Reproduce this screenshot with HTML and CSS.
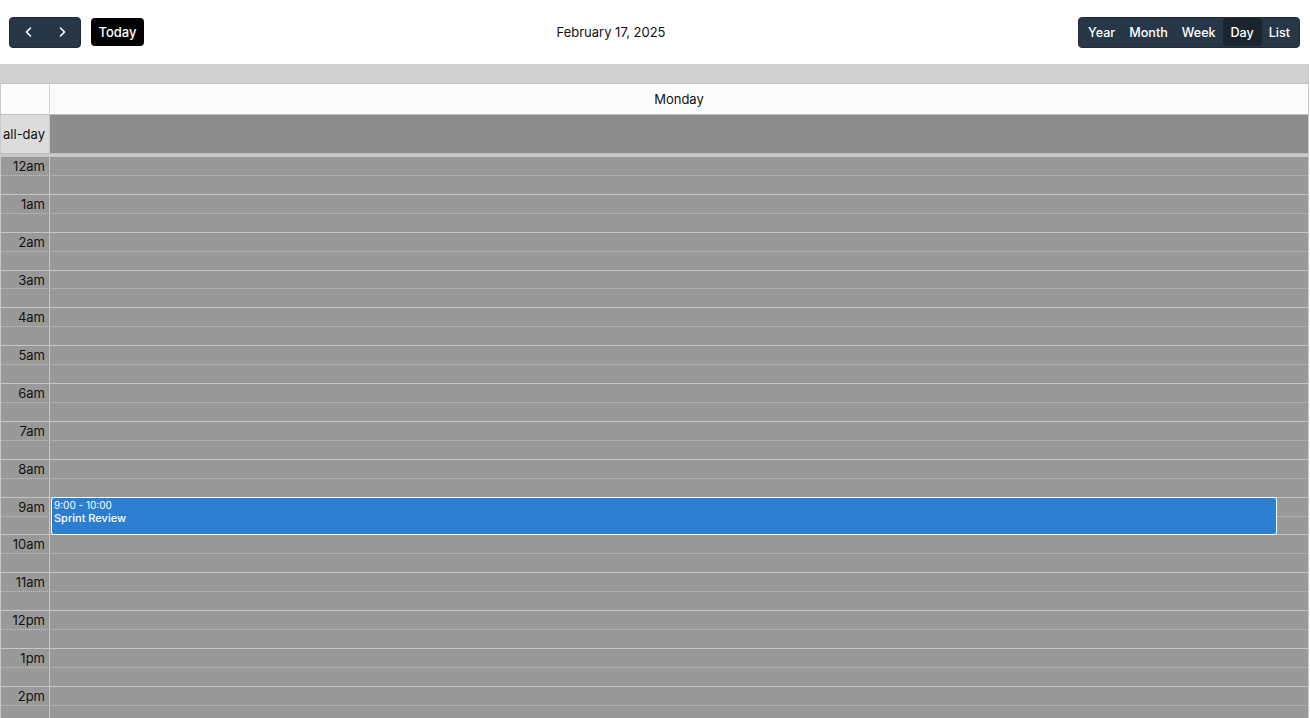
FILE: index.html
```html
<!DOCTYPE html>
<html>

<head>
    <title>Calendar</title>
    <link rel="stylesheet" href="styles.css">
</head>

<body>
    <header class="toolbar">
        <div class="toolbar-left">
            <div class="btn-group">
                <button class="btn btn-icon" aria-label="prev">
                    <svg width="14" height="14" viewBox="0 0 14 14"><path d="M8.5 3 L4.5 7 L8.5 11" /></svg>
                </button>
                <button class="btn btn-icon" aria-label="next">
                    <svg width="14" height="14" viewBox="0 0 14 14"><path d="M5.5 3 L9.5 7 L5.5 11" /></svg>
                </button>
            </div>
            <button class="btn btn-today">Today</button>
        </div>

        <h2 class="title">February 17, 2025</h2>

        <div class="btn-group views">
            <button class="btn">Year</button>
            <button class="btn">Month</button>
            <button class="btn">Week</button>
            <button class="btn active">Day</button>
            <button class="btn">List</button>
        </div>
    </header>

    <div class="calendar">
        <div class="band"></div>

        <div class="head-row">
            <div class="axis"></div>
            <div class="day-name">Monday</div>
        </div>

        <div class="allday-row">
            <div class="axis">all-day</div>
            <div class="allday-lane"></div>
        </div>

        <div class="divider"></div>

        <div class="scroller">
            <div class="slots" id="slots">
                <div class="event" style="top: calc(9 * var(--hour));">
                    <div class="event-time">9:00 - 10:00</div>
                    <div class="event-title">Sprint Review</div>
                </div>
            </div>
        </div>
    </div>

    <script>
        var slots = document.getElementById('slots');
        // only the hours that fit in the scroller before it is scrolled
        var hours = ['12am', '1am', '2am', '3am', '4am', '5am', '6am', '7am', '8am', '9am', '10am', '11am',
            '12pm', '1pm', '2pm'];

        hours.forEach(function (label) {
            ['major', 'minor'].forEach(function (kind) {
                var row = document.createElement('div');
                row.className = 'slot ' + kind;
                row.innerHTML = '<div class="slot-label">' + (kind === 'major' ? label : '') + '</div>' +
                    '<div class="slot-lane"></div>';
                slots.appendChild(row);
            });
        });
    </script>
</body>

</html>
```

FILE: styles.css
```css
html,
body {
    margin: 0;
    height: 100%;
    overflow: hidden;
}

body {
    display: flex;
    flex-direction: column;
    font-family: Inter, "Liberation Sans", sans-serif;
    font-size: 13px;
    color: #1b1b1b;
    background: #ffffff;
}

/* toolbar */

.toolbar {
    display: flex;
    flex: none;
    align-items: center;
    justify-content: space-between;
    height: 64px;
    padding: 0 10px 0 9px;
    box-sizing: border-box;
}

.toolbar-left {
    display: flex;
    align-items: center;
    gap: 10px;
}

.title {
    margin: 0;
    font-size: 13px;
    font-weight: 400;
    color: #111;
}

.btn-group {
    display: flex;
    align-items: center;
    height: 31px;
    padding: 0 2px;
    box-sizing: border-box;
    background: #283747;
    border: 1px solid #1f2b38;
    border-radius: 4px;
}

.btn {
    font-family: inherit;
    font-size: 13px;
    font-weight: 500;
    color: #ffffff;
    background: transparent;
    border: 0;
    border-radius: 4px;
    height: 28px;
    padding: 0 8px;
    cursor: pointer;
}

.btn-icon {
    width: 33px;
    display: flex;
    align-items: center;
    justify-content: center;
    padding: 0;
}

.btn-icon svg path {
    fill: none;
    stroke: #ffffff;
    stroke-width: 1.6;
    stroke-linecap: round;
    stroke-linejoin: round;
}

.btn-today {
    background: #000000;
    width: 53px;
    padding: 0;
}

.views .btn {
    font-size: 12.6px;
    padding: 0 7px;
}

.views .btn.active {
    background: #1b242e;
    width: 39px;
    padding: 0;
}

/* calendar grid */

.calendar {
    --hour: 37.86px;
    --line: #c6c6c6;
    display: flex;
    flex-direction: column;
    flex: 1;
    min-height: 0;
    width: 1309px;
}

.band {
    flex: none;
    height: 19px;
    background: #d0d0d0;
}

.head-row,
.allday-row {
    display: grid;
    flex: none;
    grid-template-columns: 49px 1fr;
    border-left: 1px solid #c9c9c9;
    border-right: 1px solid #c9c9c9;
}

.head-row {
    height: 31px;
    background: #fcfcfc;
    border-top: 1px solid #c4c4c4;
    box-sizing: border-box;
}

.head-row .axis {
    border-right: 1px solid #d4d4d4;
}

.day-name {
    display: flex;
    align-items: center;
    justify-content: center;
    color: #111;
}

.allday-row {
    height: 39px;
    border-top: 1px solid #bfbfbf;
    box-sizing: border-box;
}

.allday-row .axis {
    display: flex;
    align-items: center;
    justify-content: flex-end;
    padding-right: 4px;
    background: #dcdcdc;
    border-right: 1px solid #c8c8c8;
    color: #111;
}

.allday-lane {
    background: #8e8e8e;
}

.divider {
    flex: none;
    height: 3px;
    background: #cbcbcb;
    border-top: 1px solid #bbbbbb;
    box-sizing: border-box;
}

.scroller {
    flex: 1;
    min-height: 0;
    overflow: hidden;
    background: #999999;
    border-left: 1px solid #c6c6c6;
    border-right: 1px solid #c6c6c6;
}

.slots {
    position: relative;
}

.slot {
    display: grid;
    grid-template-columns: 49px 1fr;
    height: calc(var(--hour) / 2);
    box-sizing: border-box;
    border-top: 1px solid var(--line);
}

.slot.minor {
    border-top: 1px dotted #c3c3c3;
}

.slot-label {
    border-right: 1px solid var(--line);
    text-align: right;
    padding: 1px 4px 0 0;
    line-height: 17px;
    color: #111;
}

/* event box laid over the day lane */

.event {
    position: absolute;
    left: 50px;
    right: 31px;
    height: var(--hour);
    box-sizing: border-box;
    padding: 1px 2px;
    background: #2c7ed1;
    border: 1px solid #ffffff;
    border-radius: 3px;
    color: #ffffff;
    overflow: hidden;
}

.event-time {
    font-size: 10px;
    line-height: 12px;
}

.event-title {
    font-size: 11px;
    font-weight: 500;
    line-height: 14px;
}
```
